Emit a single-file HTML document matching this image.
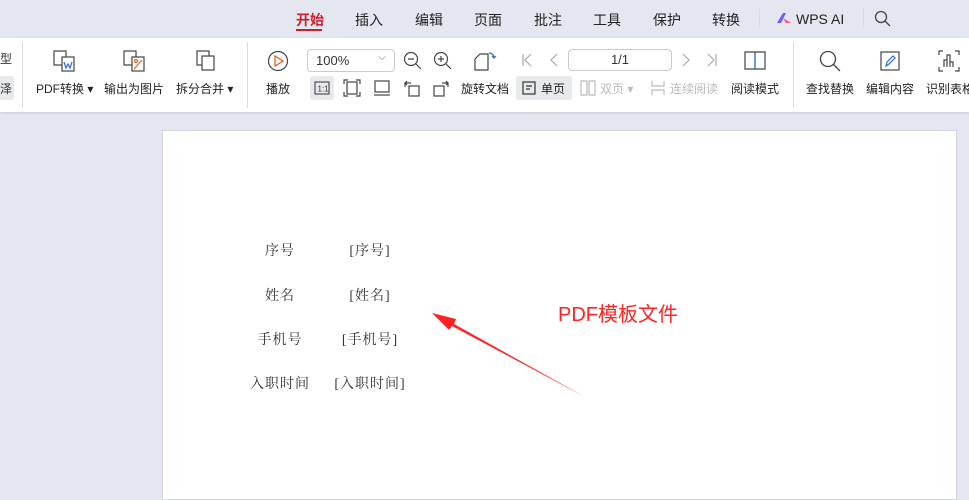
<!DOCTYPE html>
<html><head><meta charset="utf-8">
<style>
*{margin:0;padding:0;box-sizing:border-box}
body{width:969px;height:490px;overflow:hidden;background:#e4e7ef;font-family:"Liberation Sans","Noto Sans CJK SC",sans-serif;position:relative;color:#333}
.a{position:absolute;white-space:nowrap}
.tab{position:absolute;top:10px;font-size:14px;color:#222;white-space:nowrap}
.tb{position:absolute;left:0;top:38px;width:969px;height:74px;background:#fff;box-shadow:0 1px 3px rgba(0,0,0,.12)}
.lbl{position:absolute;top:80px;font-size:12px;color:#222;white-space:nowrap}
.sep{position:absolute;width:1px;background:#d8dbe0}
.g{color:#bbb}
svg{position:absolute}
.page{position:absolute;left:162px;top:130px;width:795px;height:370px;background:#fff;border:1px solid #d4d7de}
.d{position:absolute;font-family:"Liberation Serif","Noto Serif CJK SC",serif;font-size:14px;color:#333;transform:translateX(-50%);white-space:nowrap;letter-spacing:1px}
</style></head><body>
<div class="tab" style="left:296px;color:#c8202e;font-weight:bold">开始</div>
<div class="a" style="left:296px;top:29px;width:26px;height:2px;background:#c8202e"></div>
<div class="tab" style="left:355px">插入</div>
<div class="tab" style="left:415px">编辑</div>
<div class="tab" style="left:474px">页面</div>
<div class="tab" style="left:534px">批注</div>
<div class="tab" style="left:593px">工具</div>
<div class="tab" style="left:653px">保护</div>
<div class="tab" style="left:712px">转换</div>
<div class="sep" style="left:759px;top:9px;height:18px"></div>
<svg style="left:776px;top:12px" width="16" height="12"><path d="M1 11 L7 1 L10 1 L5 11Z" fill="#6a5cff"/><path d="M7 6 L15 11 L10 11Z" fill="#ff4f7a"/></svg>
<div class="tab" style="left:796px;top:11px">WPS AI</div>
<div class="sep" style="left:863px;top:8px;height:20px"></div>
<svg style="left:874px;top:10px" width="18" height="18"><circle cx="7" cy="7" r="5.5" fill="none" stroke="#444" stroke-width="1.3"/><path d="M11 11 L16 16" stroke="#444" stroke-width="1.3"/></svg>

<div class="tb"></div>
<div class="a" style="left:0;top:50px;font-size:12px">型</div>
<div class="a" style="left:0;top:76px;width:14px;height:24px;background:#e8e9ec;border-radius:0 3px 3px 0"></div>
<div class="a" style="left:0;top:80px;font-size:12px">泽</div>
<div class="sep" style="left:22px;top:42px;height:66px"></div>

<svg style="left:52px;top:49px" width="24" height="24" fill="none" stroke="#444" stroke-width="1.2"><rect x="2" y="2" width="12" height="14"/><rect x="10" y="8" width="12" height="14" fill="#fff"/><path d="M12 13 L14 19 L16 15 L18 19 L20 13" stroke="#2b6ae0"/></svg>
<div class="lbl" style="left:36px">PDF转换 ▾</div>
<svg style="left:122px;top:49px" width="24" height="24" fill="none" stroke="#444" stroke-width="1.2"><rect x="2" y="2" width="12" height="14"/><rect x="10" y="8" width="12" height="14" fill="#fff"/><path d="M12 20 L20 11" stroke="#e06020"/><circle cx="14" cy="12" r="1.5" stroke="#e06020"/></svg>
<div class="lbl" style="left:104px">输出为图片</div>
<svg style="left:194px;top:49px" width="24" height="24" fill="none" stroke="#444" stroke-width="1.2"><rect x="3" y="2" width="12" height="14"/><rect x="8" y="7" width="12" height="14" fill="#fff"/></svg>
<div class="lbl" style="left:176px">拆分合并 ▾</div>
<div class="sep" style="left:247px;top:42px;height:66px"></div>

<svg style="left:267px;top:50px" width="22" height="22" fill="none"><circle cx="11" cy="11" r="9.5" stroke="#444" stroke-width="1.2"/><path d="M8 6 L16 11 L8 16Z" stroke="#e06020" stroke-width="1.3"/></svg>
<div class="lbl" style="left:266px">播放</div>
<div class="a" style="left:307px;top:49px;width:88px;height:23px;border:1px solid #ccc;border-radius:4px;font-size:13px;padding:3px 0 0 8px">100%<span style="position:absolute;right:8px;top:2px;color:#666;font-size:10px">⌵</span></div>
<svg style="left:403px;top:51px" width="20" height="20" fill="none" stroke="#444" stroke-width="1.2"><circle cx="8" cy="8" r="6.5"/><path d="M5 8 H11 M13 13 L18 18"/></svg>
<svg style="left:433px;top:51px" width="20" height="20" fill="none" stroke="#444" stroke-width="1.2"><circle cx="8" cy="8" r="6.5"/><path d="M5 8 H11 M8 5 V11 M13 13 L18 18"/></svg>
<svg style="left:474px;top:50px" width="24" height="22" fill="none" stroke="#444" stroke-width="1.2"><path d="M1 20 V9 L6 4 H14 V20Z"/><path d="M15 3 A5 5 0 0 1 20 8 M18 6 L20 8 L22 6" stroke="#2b6ae0"/></svg>
<div class="lbl" style="left:461px">旋转文档</div>
<div class="a" style="left:310px;top:76px;width:24px;height:24px;background:#e8e9ec;border-radius:3px"></div>
<svg style="left:314px;top:81px" width="16" height="14" fill="none" stroke="#333"><rect x="1" y="1" width="14" height="12"/><text x="3.5" y="10.5" font-size="8" fill="#333" stroke="none" font-family="Liberation Sans">1:1</text></svg>
<svg style="left:343px;top:79px" width="18" height="18" fill="none" stroke="#444" stroke-width="1.2"><path d="M1 5 V1 H5 M13 1 H17 V5 M17 13 V17 H13 M5 17 H1 V13"/><rect x="4" y="3" width="10" height="12"/></svg>
<svg style="left:373px;top:79px" width="18" height="18" fill="none" stroke="#444" stroke-width="1.2"><rect x="2" y="2" width="14" height="11"/><path d="M1 16 H17"/></svg>
<svg style="left:403px;top:79px" width="18" height="18" fill="none" stroke="#444" stroke-width="1.2"><rect x="6" y="7" width="10" height="10"/><path d="M2 8 V4 H8 M4 2 L2 4 L4 6" /></svg>
<svg style="left:432px;top:79px" width="18" height="18" fill="none" stroke="#444" stroke-width="1.2"><rect x="2" y="7" width="10" height="10"/><path d="M16 8 V4 H10 M14 2 L16 4 L14 6"/></svg>

<svg style="left:521px;top:53px" width="12" height="14" fill="none" stroke="#aaa" stroke-width="1.2"><path d="M2 1 V13 M10 1 L4 7 L10 13"/></svg>
<svg style="left:548px;top:53px" width="12" height="14" fill="none" stroke="#aaa" stroke-width="1.2"><path d="M9 1 L3 7 L9 13"/></svg>
<div class="a" style="left:568px;top:49px;width:104px;height:22px;border:1px solid #ccc;border-radius:4px;font-size:13px;text-align:center;padding-top:2px">1/1</div>
<svg style="left:680px;top:53px" width="12" height="14" fill="none" stroke="#aaa" stroke-width="1.2"><path d="M3 1 L9 7 L3 13"/></svg>
<svg style="left:706px;top:53px" width="12" height="14" fill="none" stroke="#aaa" stroke-width="1.2"><path d="M2 1 L8 7 L2 13 M10 1 V13"/></svg>
<svg style="left:744px;top:50px" width="22" height="22" fill="none" stroke="#444" stroke-width="1.2"><path d="M1 2 H21 V19 H1Z M11 2 V19" /><path d="M11 3 V18" stroke="#2b6ae0"/></svg>
<div class="lbl" style="left:731px">阅读模式</div>
<div class="a" style="left:516px;top:76px;width:56px;height:24px;background:#e8e9ec;border-radius:3px"></div>
<svg style="left:522px;top:81px" width="14" height="14" fill="none" stroke="#333" stroke-width="1.2"><rect x="1" y="1" width="12" height="12"/><path d="M4 5 H10 M4 8 H8"/></svg>
<div class="lbl" style="left:541px">单页</div>
<svg style="left:580px;top:80px" width="16" height="16" fill="none" stroke="#bbb" stroke-width="1.2"><rect x="1" y="1" width="6" height="14"/><rect x="9" y="1" width="6" height="14"/></svg>
<div class="lbl g" style="left:600px">双页 ▾</div>
<svg style="left:650px;top:80px" width="16" height="16" fill="none" stroke="#bbb" stroke-width="1.2"><path d="M2 1 V6 H14 V1 M2 15 V10 H14 V15"/></svg>
<div class="lbl g" style="left:670px">连续阅读</div>
<div class="sep" style="left:793px;top:42px;height:66px"></div>

<svg style="left:819px;top:50px" width="22" height="22" fill="none" stroke="#444" stroke-width="1.3"><circle cx="9" cy="9" r="7.5"/><path d="M14.5 14.5 L21 21"/></svg>
<div class="lbl" style="left:806px">查找替换</div>
<svg style="left:879px;top:50px" width="22" height="22" fill="none" stroke="#444" stroke-width="1.2"><rect x="2" y="2" width="18" height="18"/><path d="M7 16 L8 12 L14 6 L16 8 L10 14Z" stroke="#2b6ae0"/></svg>
<div class="lbl" style="left:866px">编辑内容</div>
<svg style="left:938px;top:50px" width="22" height="22" fill="none" stroke="#444" stroke-width="1.2"><path d="M1 5 V1 H5 M17 1 H21 V5 M21 17 V21 H17 M5 21 H1 V17 M6 17 V10 H9 V17 M9 17 V5 H12 V17 M12 17 V12 H15 V17"/></svg>
<div class="lbl" style="left:926px">识别表格</div>

<div class="page"></div>
<div class="d" style="left:280px;top:240px">序号</div>
<div class="d" style="left:370px;top:240px">[序号]</div>
<div class="d" style="left:280px;top:285px">姓名</div>
<div class="d" style="left:370px;top:285px">[姓名]</div>
<div class="d" style="left:280px;top:329px">手机号</div>
<div class="d" style="left:370px;top:329px">[手机号]</div>
<div class="d" style="left:280px;top:373px">入职时间</div>
<div class="d" style="left:370px;top:373px">[入职时间]</div>
<svg style="left:420px;top:300px" width="180" height="110"><path d="M165 97 L34 24 L36 19 L12 13 L29 30 L32 26 Z" fill="#f22"/></svg>
<div class="a" style="left:558px;top:298px;font-size:20px;color:#f22">PDF模板文件</div>
</body></html>
